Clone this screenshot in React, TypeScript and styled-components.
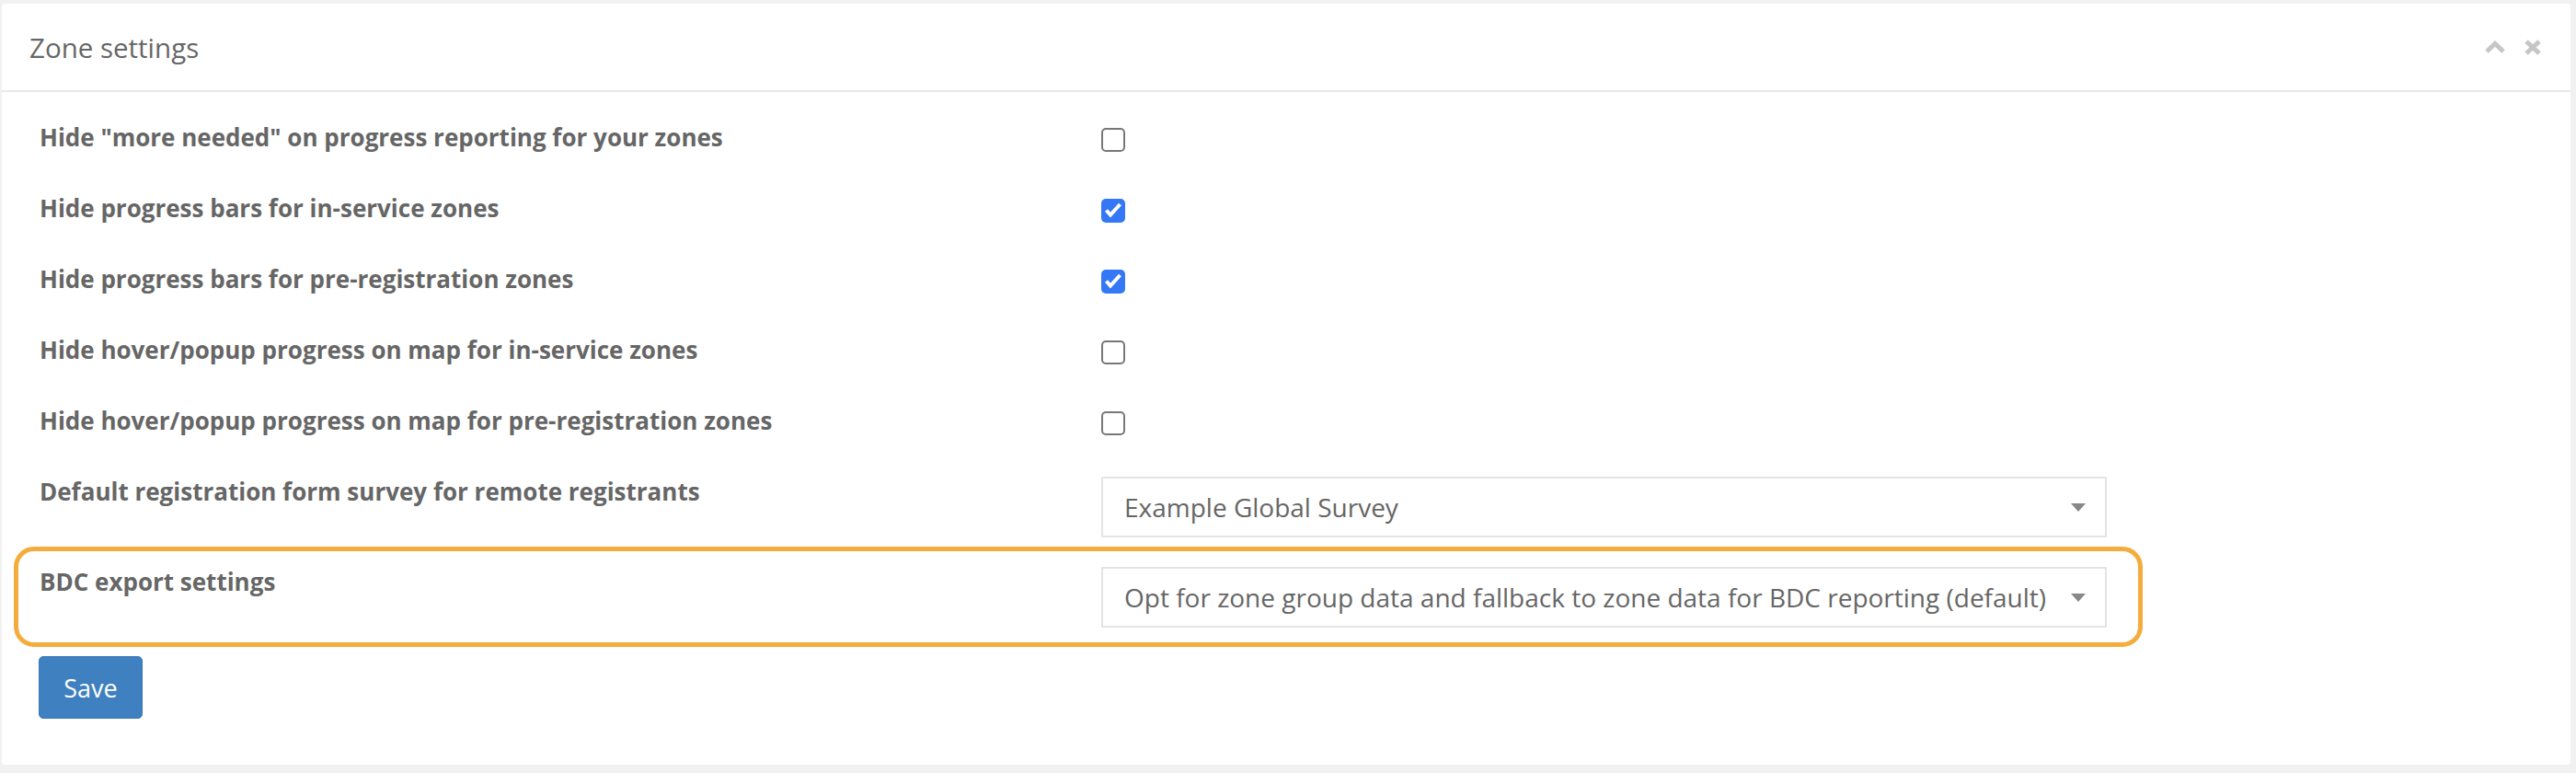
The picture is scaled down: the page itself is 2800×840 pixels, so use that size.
import React from 'react';
import styled, { createGlobalStyle } from 'styled-components';

const GlobalStyle = createGlobalStyle`
  html, body {
    margin: 0;
    padding: 0;
    background: #f1f1f1;
    font-family: "Open Sans", "Liberation Sans", sans-serif;
  }
`;

const Page = styled.div`
  padding: 4px 6px 9px 2px;
`;

const Panel = styled.section`
  background: #fff;
  border-radius: 3px;
`;

const PanelHeader = styled.header`
  height: 94px;
  display: flex;
  align-items: center;
  justify-content: space-between;
  padding: 0 31px 0 30px;
  border-bottom: 2px solid #e9e9e9;
`;

const Title = styled.h3`
  margin: 0;
  font-size: 29.5px;
  font-weight: 400;
  color: #666;
`;

const Tools = styled.div`
  display: flex;
  align-items: center;
  gap: 19px;
`;

const ToolButton = styled.button`
  border: none;
  background: none;
  padding: 0;
  display: flex;
  cursor: pointer;
`;

const PanelBody = styled.div`
  padding: 29px 0 50px 13px;
`;

const Row = styled.div<{ $gap?: number }>`
  display: flex;
  align-items: flex-start;
  padding-left: 28px;
  margin-bottom: ${p => p.$gap ?? 37}px;
`;

const Label = styled.label`
  width: 1154px;
  flex-shrink: 0;
  font-size: 26px;
  line-height: 40px;
  font-weight: 700;
  color: #666;
`;

const Box = styled.span<{ $checked: boolean }>`
  width: 26px;
  height: 26px;
  margin-top: 10px;
  box-sizing: border-box;
  border-radius: 5px;
  display: flex;
  border: ${p => (p.$checked ? 'none' : '2px solid #777')};
  background: ${p => (p.$checked ? '#3478f6' : '#fff')};
`;

const Select = styled.div`
  width: 1093px;
  height: 66px;
  margin-top: 4px;
  box-sizing: border-box;
  border: 2px solid #e4e4e4;
  display: flex;
  align-items: center;
  justify-content: space-between;
  padding: 0 21px 0 23px;
  font-size: 28px;
  color: #666;
  white-space: nowrap;
`;

const Caret = styled.span`
  width: 0;
  height: 0;
  border-left: 8px solid transparent;
  border-right: 8px solid transparent;
  border-top: 9px solid #888;
`;

const Highlight = styled.div`
  width: 2314px;
  box-sizing: border-box;
  margin-top: 10px;
  border: 5px solid #f4ac3d;
  border-radius: 22px;
  padding: 13px 0 16px 0;

  ${Row} {
    padding-left: 23px;
    margin-bottom: 0;
  }
`;

const SaveButton = styled.button`
  margin: 10px 0 0 27px;
  width: 113px;
  height: 68px;
  border: 1px solid #3a78b8;
  border-radius: 5px;
  background: #3f80c1;
  color: #fff;
  font-family: inherit;
  font-size: 27px;
  cursor: pointer;
`;

const checks = [
  { label: 'Hide "more needed" on progress reporting for your zones', checked: false },
  { label: 'Hide progress bars for in-service zones', checked: true },
  { label: 'Hide progress bars for pre-registration zones', checked: true },
  { label: 'Hide hover/popup progress on map for in-service zones', checked: false },
  { label: 'Hide hover/popup progress on map for pre-registration zones', checked: false },
];

const Checkbox = ({ checked }: { checked: boolean }) => (
  <Box $checked={checked}>
    {checked && (
      <svg width="26" height="26" viewBox="0 0 26 26">
        <path d="M5.5 12.5 L10 17.5 L20.5 6" fill="none" stroke="#fff" strokeWidth="4" />
      </svg>
    )}
  </Box>
);

export default function App() {
  return (
    <>
      <GlobalStyle />
      <Page>
        <Panel>
          <PanelHeader>
            <Title>Zone settings</Title>
            <Tools>
              <ToolButton aria-label="Collapse">
                <svg width="24" height="16" viewBox="0 0 24 16">
                  <path d="M3 13 L12 4.5 L21 13" fill="none" stroke="#c6c6c6" strokeWidth="5" />
                </svg>
              </ToolButton>
              <ToolButton aria-label="Remove">
                <svg width="20" height="17" viewBox="0 0 20 17">
                  <path d="M3 2 L17 15 M17 2 L3 15" fill="none" stroke="#c6c6c6" strokeWidth="5" />
                </svg>
              </ToolButton>
            </Tools>
          </PanelHeader>
          <PanelBody>
            {checks.map(c => (
              <Row key={c.label}>
                <Label>{c.label}</Label>
                <Checkbox checked={c.checked} />
              </Row>
            ))}
            <Row $gap={0}>
              <Label>Default registration form survey for remote registrants</Label>
              <Select>
                Example Global Survey
                <Caret />
              </Select>
            </Row>
            <Highlight>
              <Row>
                <Label>BDC export settings</Label>
                <Select>
                  Opt for zone group data and fallback to zone data for BDC reporting (default)
                  <Caret />
                </Select>
              </Row>
            </Highlight>
            <SaveButton>Save</SaveButton>
          </PanelBody>
        </Panel>
      </Page>
    </>
  );
}
